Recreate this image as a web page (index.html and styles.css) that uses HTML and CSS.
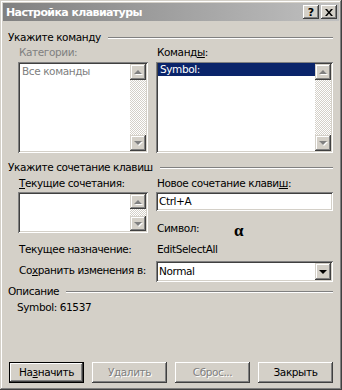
FILE: index.html
```html
<!DOCTYPE html>
<html lang="ru">
<head>
    <meta charset="utf-8">
    <title>Настройка клавиатуры</title>
    <link rel="stylesheet" href="styles.css">
</head>
<body>
<div class="window">
    <div class="titlebar">
        <span class="title">Настройка клавиатуры</span>
        <div class="title-buttons">
            <span class="tbtn help">?</span>
            <span class="tbtn close">
                <svg width="8" height="7" viewBox="0 0 8 7"><path d="M0 0h2l2 2.5L6 0h2L5 3.5 8 7H6L4 4.5 2 7H0l3-3.5z" fill="#000"/></svg>
            </span>
        </div>
    </div>

    <!-- команда -->
    <div class="group-head head-cmd"><span>Укажите команду</span><div class="etch"></div></div>
    <div class="cmd-pane">
        <div class="col">
            <div class="label disabled">Категории:</div>
            <div class="listbox tall">
                <div class="items"><div class="item gray">Все команды</div></div>
                <div class="vscroll">
                    <div class="sbtn"><i class="arrow up"></i></div>
                    <div class="track"></div>
                    <div class="sbtn"><i class="arrow down"></i></div>
                </div>
            </div>
        </div>
        <div class="col">
            <div class="label">Команд<u>ы</u>:</div>
            <div class="listbox tall">
                <div class="items"><div class="item selected">Symbol:</div></div>
                <div class="vscroll">
                    <div class="sbtn"><i class="arrow up"></i></div>
                    <div class="track"></div>
                    <div class="sbtn"><i class="arrow down"></i></div>
                </div>
            </div>
        </div>
    </div>

    <!-- сочетание клавиш -->
    <div class="group-head head-keys"><span>Укажите сочетание клавиш</span><div class="etch"></div></div>
    <div class="keys-pane">
        <div class="label"><u>Т</u>екущие сочетания:</div>
        <div class="label">Новое сочетание клави<u>ш</u>:</div>

        <div class="listbox short">
            <div class="items"></div>
            <div class="vscroll">
                <div class="sbtn"><i class="arrow up"></i></div>
                <div class="track"></div>
                <div class="sbtn"><i class="arrow down"></i></div>
            </div>
        </div>
        <div class="field">Ctrl+A</div>

        <div class="symbol-row"><span class="label sym-label">Символ:</span><span class="alpha">α</span></div>

        <div class="label">Текущее назначение:</div>
        <div class="label">EditSelectAll</div>

        <div class="label">Со<u>х</u>ранить изменения в:</div>
        <div class="combo">
            <span class="combo-text">Normal</span>
            <span class="combo-btn"><i class="arrow down dark"></i></span>
        </div>
    </div>

    <!-- описание -->
    <div class="group-head head-desc"><span>Описание</span><div class="etch"></div></div>
    <div class="desc">Symbol: 61537</div>

    <div class="buttons">
        <span class="btn default">На<u>з</u>начить</span>
        <span class="btn off">Удалить</span>
        <span class="btn off">Сброс...</span>
        <span class="btn">Закрыть</span>
    </div>
</div>
</body>
</html>
```

FILE: styles.css
```css
/* окно целиком */
body {
    margin: 0;
    background: #d4d0c8;
}

.window {
    width: 342px;
    height: 390px;
    box-sizing: border-box;
    padding: 3px;
    display: flex;
    flex-direction: column;
    background: #d4d0c8;
    box-shadow: inset -1px -1px #404040, inset 1px 1px #d4d0c8,
                inset -2px -2px #808080, inset 2px 2px #fff;
    font-family: "DejaVu Sans", sans-serif;
    font-size: 10.5px;
    letter-spacing: -0.4px;
    line-height: 13px;
    color: #000;
}

u {
    text-decoration: underline;
    text-underline-offset: 1px;
}

/* заголовок */
.titlebar {
    height: 18px;
    display: flex;
    align-items: center;
    justify-content: space-between;
    background: linear-gradient(to right, #808080, #c0c0c0);
    padding: 0 2px 0 3px;
}

.title {
    color: #fff;
    font-weight: bold;
    font-size: 11px;
    letter-spacing: -0.6px;
}

.title-buttons {
    display: flex;
    gap: 2px;
}

.tbtn {
    width: 16px;
    height: 14px;
    display: flex;
    align-items: center;
    justify-content: center;
    background: #d4d0c8;
    box-shadow: inset -1px -1px #404040, inset 1px 1px #fff,
                inset -2px -2px #808080, inset 2px 2px #d4d0c8;
    font-weight: bold;
    font-size: 11px;
    letter-spacing: 0;
}

.tbtn.help {
    padding-top: 1px;
    box-sizing: border-box;
}

/* заголовки групп */
.group-head {
    display: flex;
    align-items: center;
    gap: 7px;
    margin: 0 6px 0 5px;
}

.etch {
    flex: 1;
    border-top: 1px solid #808080;
    border-bottom: 1px solid #fff;
}

.head-cmd { margin-top: 10px; }
.head-keys { margin-top: 8px; }
.head-desc { margin-top: 3px; }

.label {
    padding-left: 1px;
    white-space: nowrap;
}

.label.disabled {
    color: #808080;
}

/* списки */
.cmd-pane {
    display: grid;
    grid-template-columns: 130px 177px;
    column-gap: 8px;
    margin: 2px 0 0 15px;
}

.cmd-pane .listbox {
    margin-top: 3px;
}

.listbox {
    display: flex;
    background: #fff;
    padding: 2px;
    box-shadow: inset 1px 1px #808080, inset -1px -1px #fff,
                inset 2px 2px #404040, inset -2px -2px #d4d0c8;
}

.listbox.tall { height: 91px; box-sizing: border-box; }
.listbox.short { height: 41px; box-sizing: border-box; }

.items {
    flex: 1;
}

.item {
    height: 13px;
    padding-left: 2px;
    white-space: nowrap;
}

.item.gray { color: #808080; padding-top: 1px; }

.item.selected {
    background: #0a246a;
    color: #fff;
    margin-top: -1px;
}

.vscroll {
    width: 16px;
    display: flex;
    flex-direction: column;
}

.track {
    flex: 1;
    background: repeating-conic-gradient(#fff 0 25%, #d4d0c8 0 50%) 0 0 / 2px 2px;
}

.sbtn {
    height: 16px;
    flex: none;
    display: flex;
    align-items: center;
    justify-content: center;
    background: #d4d0c8;
    box-shadow: inset -1px -1px #404040, inset 1px 1px #d4d0c8,
                inset -2px -2px #808080, inset 2px 2px #fff;
}

.listbox.short .sbtn { height: 15px; }

.arrow {
    width: 0;
    height: 0;
    border-left: 4px solid transparent;
    border-right: 4px solid transparent;
    filter: drop-shadow(1px 1px 0 #fff);
}

.arrow.up { border-bottom: 4px solid #808080; }
.arrow.down { border-top: 4px solid #808080; }
.arrow.dark { border-top-color: #000; filter: none; }

/* сочетания клавиш */
.keys-pane {
    display: grid;
    grid-template-columns: 130px 177px;
    grid-template-rows: 15px 19px 29px 18px 24px;
    column-gap: 8px;
    align-items: center;
    margin: 3px 0 0 15px;
}

.keys-pane > .label:nth-child(1),
.keys-pane > .label:nth-child(2) {
    align-self: start;
}

.listbox.short {
    grid-row: 2 / 4;
    align-self: start;
}

.field {
    height: 19px;
    box-sizing: border-box;
    background: #fff;
    padding: 3px 3px 0;
    box-shadow: inset 1px 1px #808080, inset -1px -1px #fff,
                inset 2px 2px #404040, inset -2px -2px #d4d0c8;
}

.symbol-row {
    grid-column: 2;
    display: flex;
    align-items: center;
    align-self: start;
    padding-top: 9px;
}

.sym-label {
    width: 77px;
}

.alpha {
    margin-top: 4px;
    font-family: "Liberation Serif", serif;
    font-size: 17px;
    font-weight: bold;
    letter-spacing: 0;
}

.combo {
    height: 21px;
    margin-top: 3px;
    box-sizing: border-box;
    display: flex;
    align-items: center;
    background: #fff;
    padding: 2px;
    box-shadow: inset 1px 1px #808080, inset -1px -1px #fff,
                inset 2px 2px #404040, inset -2px -2px #d4d0c8;
}

.combo-text {
    flex: 1;
    padding-left: 1px;
}

.combo-btn {
    width: 16px;
    height: 17px;
    display: flex;
    align-items: center;
    justify-content: center;
    background: #d4d0c8;
    box-shadow: inset -1px -1px #404040, inset 1px 1px #d4d0c8,
                inset -2px -2px #808080, inset 2px 2px #fff;
}

/* описание */
.desc {
    margin: 3px 0 0 14px;
}

/* кнопки */
.buttons {
    margin: auto 6px 4px 6px;
    display: flex;
    justify-content: space-between;
}

.btn {
    width: 75px;
    height: 21px;
    box-sizing: border-box;
    display: flex;
    align-items: center;
    justify-content: center;
    box-shadow: inset -1px -1px #404040, inset 1px 1px #fff,
                inset -2px -2px #808080, inset 2px 2px #d4d0c8;
}

.btn.default {
    box-shadow: inset 0 0 0 1px #000, inset -2px -2px #404040, inset 2px 2px #fff,
                inset -3px -3px #808080, inset 3px 3px #d4d0c8;
}

.btn.off {
    color: #808080;
    text-shadow: 1px 1px #fff;
}
```
